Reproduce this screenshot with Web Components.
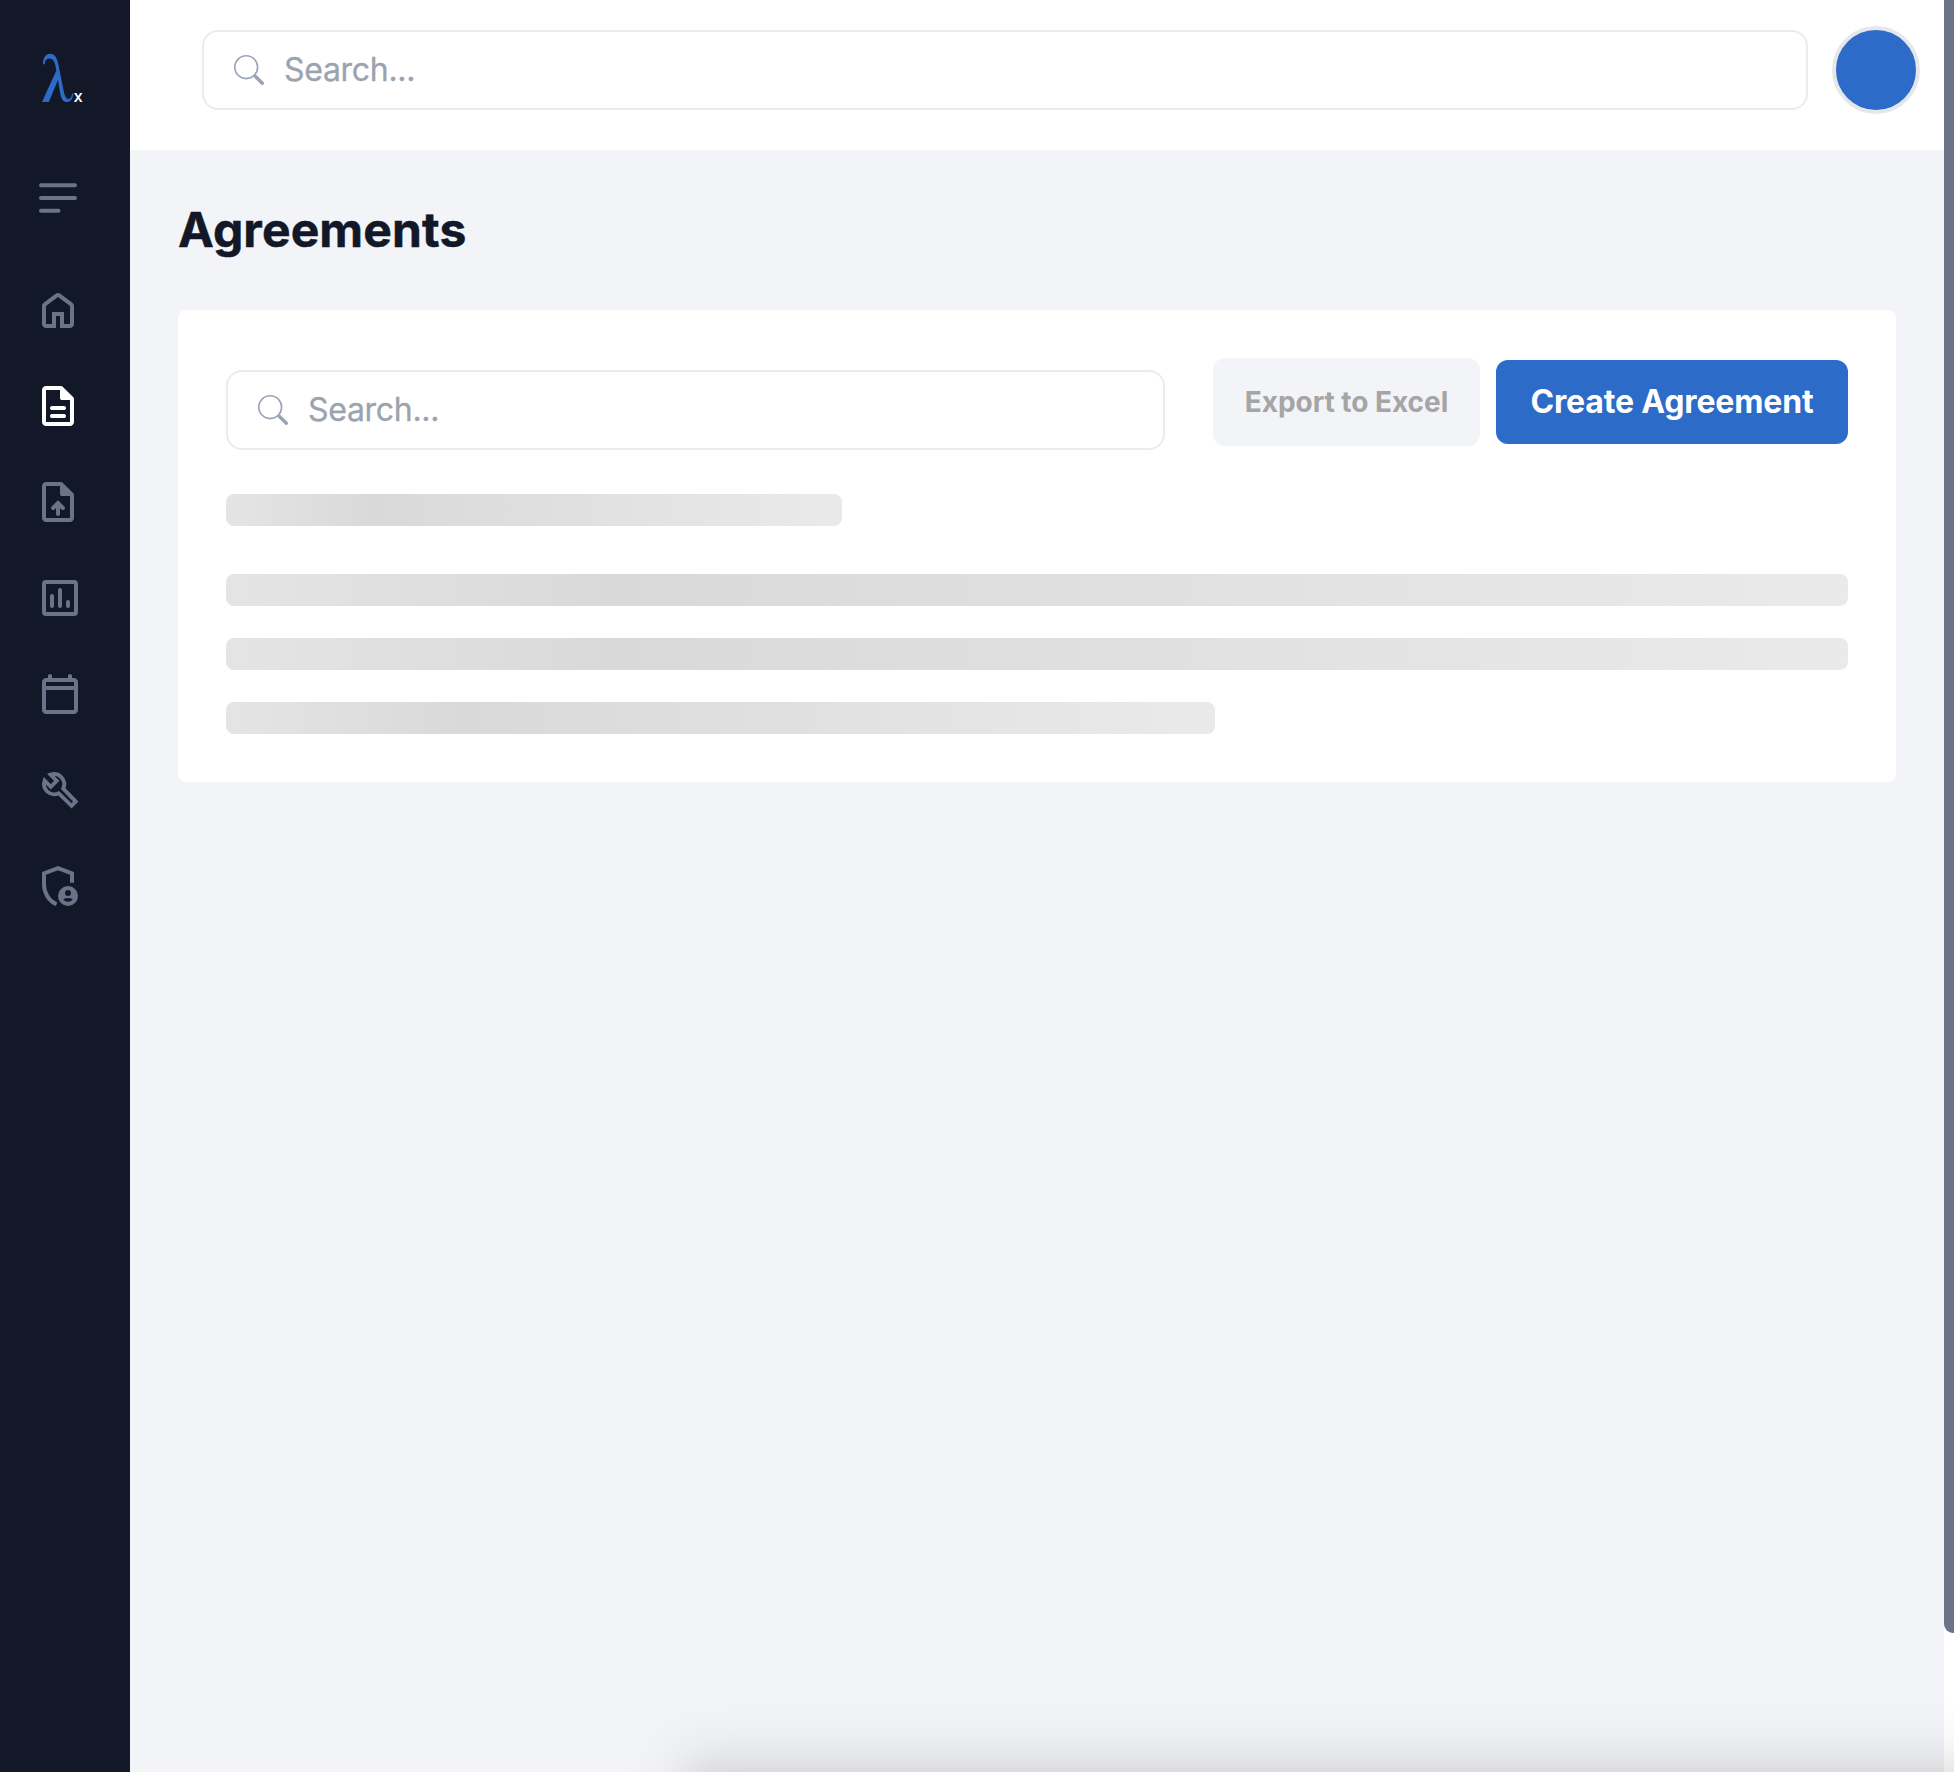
<!DOCTYPE html>
<html lang="en">
<head>
<meta charset="utf-8">
<title>Agreements</title>
<style>
html,body{margin:0;height:100%;overflow:hidden}
body{font-family:Inter,"Liberation Sans",sans-serif;background:#fff}
</style>
</head>
<body>
<app-shell></app-shell>
<script>
const define = (name, html) => customElements.define(name, class extends HTMLElement {
  constructor() {
    super();
    const t = document.createElement('template');
    t.innerHTML = html;
    this.attachShadow({mode: 'open'}).append(t.content.cloneNode(true));
  }
});

define('app-logo', `
<style>:host{display:block;width:48px;height:54px}svg{display:block;overflow:visible}</style>
<svg width="48" height="54" viewBox="36 50 48 54">
  <path fill="#2d6bc8" d="M43 64.200C43 58 45.500 53.800 50.200 53.800C55 53.800 57.400 58.500 58.600 65.500L63.300 89C64.500 94.800 65.600 98.900 68.400 98.900C70.700 98.900 71.800 97 72 93.600H73.200C72.900 98.800 70.800 102.100 67 102.100C62.500 102.100 60.900 97.600 59.900 92L58 79.900L48.800 101.900H42L56.300 70.600C55.500 63 53.600 58.500 49.600 58.500C46.600 58.500 44.900 60.300 44.600 64.200Z"/>
  <text x="73.700" y="101.800" fill="#fff" font-family="Open Sans" font-weight="600" font-size="16">x</text>
</svg>`);

const icons = {
  home: '<path d="M6 19h3v-6h6v6h3v-9l-6-4.500L6 10Zm-2 0v-9q0-.475.213-.9.212-.425.587-.7l6-4.500q.525-.4 1.200-.4.675 0 1.200.4l6 4.500q.375.275.588.7.212.425.212.9v9q0 .825-.587 1.413Q18.825 21 18 21h-5v-6h-2v6H6q-.825 0-1.412-.587Q4 19.825 4 19Z"/>',
  doc: '<path d="M9 18h6q.425 0 .713-.288Q16 17.425 16 17t-.287-.712Q15.425 16 15 16H9q-.425 0-.712.288Q8 16.575 8 17t.288.712Q8.575 18 9 18Zm0-4h6q.425 0 .713-.288Q16 13.425 16 13t-.287-.713Q15.425 12 15 12H9q-.425 0-.712.287Q8 12.575 8 13t.288.712Q8.575 14 9 14Zm-3 8q-.825 0-1.412-.587Q4 20.825 4 20V4q0-.825.588-1.413Q5.175 2 6 2h7.175q.4 0 .763.150.362.150.637.425l4.850 4.850q.275.275.425.637.150.363.150.763V20q0 .825-.587 1.413Q18.825 22 18 22Zm7-14V4H6v16h12V9h-4q-.425 0-.712-.288Q13 8.425 13 8Z"/>',
  upload: '<path d="M6 22q-.825 0-1.412-.587Q4 20.825 4 20V4q0-.825.588-1.413Q5.175 2 6 2h7.175q.4 0 .763.150.362.150.637.425l4.850 4.850q.275.275.425.637.150.363.150.763V20q0 .825-.587 1.413Q18.825 22 18 22Zm7-14V4H6v16h12V9h-4q-.425 0-.712-.288Q13 8.425 13 8Z"/><path fill="none" stroke="currentColor" stroke-width="2" stroke-linecap="round" d="M12 18v-5.200M9.550 15l2.450-2.450L14.450 15"/>',
  chart: '<path fill-rule="evenodd" d="M5 3H19Q21 3 21 5V19Q21 21 19 21H5Q3 21 3 19V5Q3 3 5 3ZM5 5V19H19V5Z"/><path fill="none" stroke="currentColor" stroke-width="2" stroke-linecap="round" d="M8 11v5M12 8v8M16 14v2"/>',
  calendar: '<path fill-rule="evenodd" d="M5 22q-.825 0-1.412-.587Q3 20.825 3 20V6q0-.825.588-1.412Q4.175 4 5 4h1V3q0-.425.288-.713Q6.575 2 7 2t.713.287Q8 2.575 8 3v1h8V3q0-.425.288-.713Q16.575 2 17 2t.712.287Q18 2.575 18 3v1h1q.825 0 1.413.588Q21 5.175 21 6v14q0 .825-.587 1.413Q19.825 22 19 22Zm0-2h14V10H5ZM5 8h14V6H5Z"/>',
  wrench: '<path fill="none" stroke="currentColor" stroke-width="1.900" stroke-miterlimit="3" d="M7.300 4.300 10.400 7.400 7.400 10.400 4.300 7.300A5.100 5.100 0 0 0 11.300 13.600L17.800 19.900 19.900 17.800 13.600 11.300A5.100 5.100 0 0 0 7.300 4.300Z"/>',
  shield: '<path fill="none" stroke="currentColor" stroke-width="2" d="M19 10.400V5.700L12 3.050 5 5.700V11C5 15.500 7.500 19.600 11.300 21.100"/><circle cx="17" cy="17" r="5"/><circle cx="17" cy="15.500" r="1.500" fill="#121827"/><path fill="#121827" d="M14.550 18.650Q17 17.400 19.450 18.650Q18.500 19.900 17 19.900T14.550 18.650Z"/>'
};
customElements.define('nav-icon', class extends HTMLElement {
  constructor() { super(); this.attachShadow({mode: 'open'}); }
  connectedCallback() {
    this.shadowRoot.innerHTML = `<style>:host{display:block;width:48px;height:48px;color:#6a7387}:host([active]){color:#fff}svg{display:block}</style>
    <svg width="48" height="48" viewBox="0 0 24 24" fill="currentColor">${icons[this.getAttribute('name')]}</svg>`;
  }
});

define('menu-toggle', `
<style>:host{display:block;width:38px;height:30px}svg{display:block}</style>
<svg width="38" height="30" fill="none" stroke="#6a7387" stroke-width="4" stroke-linecap="round"><path d="M2 2.300H36M2 15H36M2 27.700H19.500"/></svg>`);

define('side-bar', `
<style>
:host{display:flex;flex-direction:column;width:130px;height:100%;background:#121827;flex:none;box-sizing:border-box;padding-top:50px}
app-logo{margin-left:36px}
menu-toggle{margin:79px 0 0 39px}
nav{display:flex;flex-direction:column;gap:48px;padding:73px 0 0 34px}
.wide{margin-left:2px}
</style>
<app-logo></app-logo>
<menu-toggle></menu-toggle>
<nav>
  <nav-icon name="home"></nav-icon>
  <nav-icon name="doc" active></nav-icon>
  <nav-icon name="upload"></nav-icon>
  <nav-icon class="wide" name="chart"></nav-icon>
  <nav-icon class="wide" name="calendar"></nav-icon>
  <nav-icon class="wide" name="wrench"></nav-icon>
  <nav-icon name="shield"></nav-icon>
</nav>`);

define('search-field', `
<style>
:host{display:flex;align-items:center;box-sizing:border-box;height:80px;border:2px solid #ebebf0;border-radius:16px;background:#fff;padding-left:30px;gap:20px;color:#9ca3b0;font-size:32px;line-height:40px}
svg{display:block;flex:none}
.t{letter-spacing:-.3px;-webkit-text-stroke:.3px #9ca3b0}
</style>
<svg width="30" height="30" viewBox="0 0 30 30" fill="none" stroke="#9aa3b5"><circle cx="12.200" cy="12.200" r="11.400" stroke-width="1.600"/><path d="M20.300 20.300 22 22" stroke-width="2"/><path d="M21.500 21.500 28.300 28.300" stroke-width="3.400" stroke-linecap="round"/></svg>
<span class="t"><slot></slot></span>`);

define('user-avatar', `<style>:host{display:block;width:80px;height:80px;border:4px solid #e5e7eb;border-radius:50%;background:#2d6bc8;flex:none}</style>`);

define('top-bar', `
<style>
:host{display:flex;align-items:center;box-sizing:border-box;height:150px;background:#fff;padding:0 24px 10px 72px;gap:24px;flex:none}
search-field{flex:1}
</style>
<search-field>Search...</search-field><user-avatar></user-avatar>`);

define('action-button', `
<style>
:host{display:flex;align-items:center;justify-content:center;box-sizing:border-box;border-radius:12px;white-space:nowrap;flex:none;font-weight:700;letter-spacing:-.05px;width:267px;height:88px;font-size:28px;color:#a5a5a5;background:#f3f4f8}
:host([primary]){width:352px;height:84px;padding-bottom:2px;letter-spacing:-.15px;font-size:32px;color:#fff;background:#2d6bc8}
</style><slot></slot>`);

define('skeleton-bar', `
<style>:host{display:block;height:32px;border-radius:8px;background:linear-gradient(90deg,#f0f0f0 -24%,#d9d9d9 24%,#f0f0f0 128%)}</style>`);

define('agreements-card', `
<style>
:host{display:block;box-sizing:border-box;height:472px;background:#fff;border-radius:8px;padding:48px}
.tools{display:flex;align-items:flex-start}
search-field{flex:1;margin:12px 48px 0 0}
.actions{display:flex;align-items:center;gap:16px}
.rows{display:flex;flex-direction:column;gap:32px;margin-top:44px}
.title{width:38%;margin-bottom:16px}
.last{width:61%}
</style>
<div class="tools">
  <search-field>Search...</search-field>
  <div class="actions"><action-button>Export to Excel</action-button><action-button primary>Create Agreement</action-button></div>
</div>
<div class="rows"><skeleton-bar class="title"></skeleton-bar><skeleton-bar></skeleton-bar><skeleton-bar></skeleton-bar><skeleton-bar class="last"></skeleton-bar></div>`);

define('page-scrollbar', `
<style>:host{display:block;width:10px;height:100%;background:#fff;flex:none}div{height:1633px;background:#6a7387;border-radius:0 0 0 9px}</style><div></div>`);

define('drawer-shadow', `
<style>:host{position:absolute;left:690px;top:1780px;width:1400px;height:400px;box-shadow:0 -12px 32px 0 rgba(0,0,0,.065),0 -18px 56px 16px rgba(0,0,0,.07)}</style>`);

define('app-shell', `
<style>
:host{display:flex;position:relative;width:1954px;height:1772px;overflow:hidden}
main{flex:1;display:flex;flex-direction:column;background:#f3f4f8}
section{padding:44px 48px}
h1{margin:0 0 44px;height:72px;line-height:72px;font-size:48px;font-weight:700;color:#121827;letter-spacing:.15px;-webkit-text-stroke:.5px #121827}
</style>
<side-bar></side-bar>
<main><top-bar></top-bar><section><h1>Agreements</h1><agreements-card></agreements-card></section></main>
<page-scrollbar></page-scrollbar>
<drawer-shadow></drawer-shadow>`);
</script>
</body>
</html>
